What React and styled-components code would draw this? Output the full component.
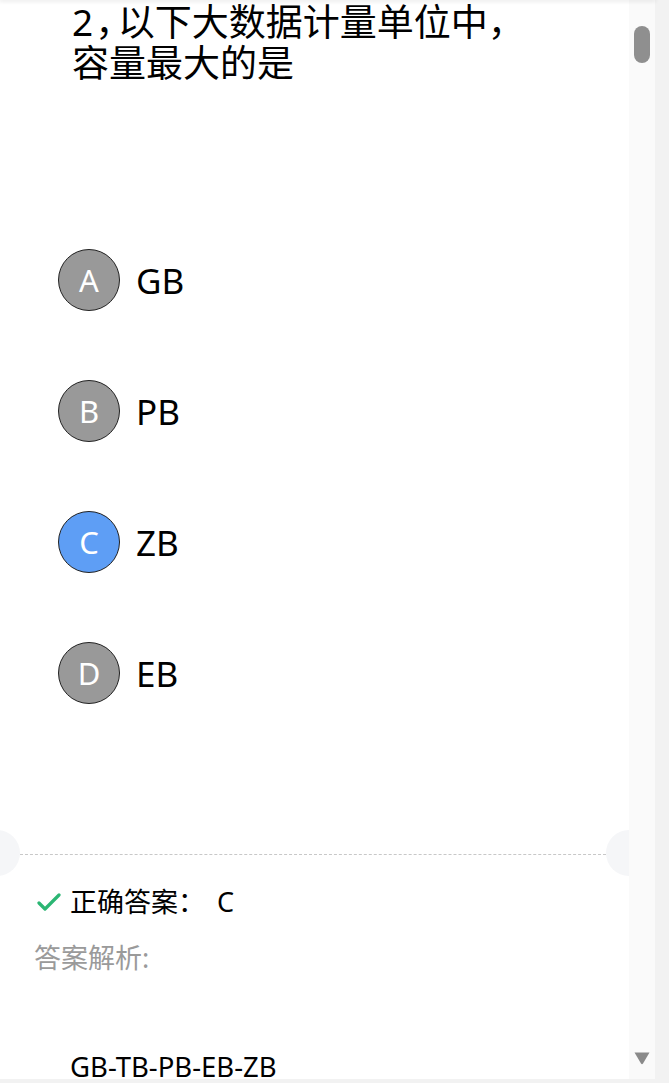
import React from "react";
import styled, { createGlobalStyle } from "styled-components";

const Global = createGlobalStyle`
  html, body { margin: 0; padding: 0; }
  body {
    background: #f2f2f2;
    font-family: "Noto Sans", "Noto Sans CJK SC", sans-serif;
    color: #000;
    overflow: hidden;
  }
`;

const Page = styled.div`
  display: flex;
  width: 669px;
  height: 1083px;
  background: #f2f2f2;
`;

const Frame = styled.div`
  display: flex;
  flex-direction: column;
  width: 655px;
  height: 1079px;
`;

const TopShadow = styled.div`
  position: relative;
  z-index: 2;
  height: 0;
  box-shadow: 0 0 4px 1px rgba(0, 0, 0, 0.14);
`;

const Body = styled.div`
  display: flex;
  flex: 1;
  min-height: 0;
`;

const Content = styled.div`
  width: 629px;
  background: #fff;
  overflow: hidden;
  display: flex;
  flex-direction: column;
`;

const Track = styled.div`
  width: 26px;
  background: #fafafa;
  display: flex;
  flex-direction: column;
  align-items: center;
  justify-content: space-between;
  padding: 26px 0 14px;
  box-sizing: border-box;
`;

const Thumb = styled.div`
  width: 16px;
  height: 37px;
  border-radius: 8px;
  background: #8f8f8f;
`;

const Question = styled.div`
  padding: 1px 0 0 72px;
  width: 470px;
  font-size: 37px;
  line-height: 41px;
`;

const Punct = styled.span`
  font-feature-settings: "halt";
  padding-left: 2px;
  padding-right: 4px;
`;

const OptionList = styled.div`
  display: flex;
  flex-direction: column;
  gap: 69px;
  margin-top: 166px;
  padding-left: 58px;
`;

const OptionRow = styled.div`
  display: flex;
  align-items: center;
  gap: 16px;
  height: 62px;
`;

const Badge = styled.div`
  width: 60px;
  height: 60px;
  border-radius: 50%;
  border: 1px solid #222;
  background: ${(p) => (p.$active ? "#5e9ef5" : "#999999")};
  color: #fff;
  display: flex;
  align-items: center;
  justify-content: center;
  font-size: 31px;
  line-height: 1;
`;

const OptionLabel = styled.span`
  font-size: 35px;
  line-height: 1;
`;

const Divider = styled.div`
  display: flex;
  align-items: center;
  margin-top: 126px;
  height: 46px;
`;

const Notch = styled.div`
  flex: none;
  width: 46px;
  height: 46px;
  border-radius: 50%;
  background: #f5f6f8;
  margin-left: ${(p) => (p.$side === "left" ? "-26px" : "0")};
  margin-right: ${(p) => (p.$side === "right" ? "-23px" : "0")};
`;

const Dashes = styled.div`
  flex: 1;
  border-top: 1px dashed #c8c8c8;
  margin-top: 3px;
`;

const AnswerRow = styled.div`
  display: flex;
  align-items: center;
  gap: 9px;
  margin-top: 8px;
  padding-left: 37px;
  height: 36px;
  font-size: 27px;
  line-height: 36px;
`;

const AnswerValue = styled.span`
  margin-left: 12px;
`;

const AnalysisLabel = styled.div`
  margin-top: 20px;
  padding-left: 34px;
  font-size: 27px;
  line-height: 36px;
  color: #9a9a9a;
`;

const Explanation = styled.div`
  margin-top: 73px;
  padding-left: 70px;
  font-size: 27.5px;
  line-height: 36px;
`;

const options = [
  { key: "A", label: "GB" },
  { key: "B", label: "PB" },
  { key: "C", label: "ZB", active: true },
  { key: "D", label: "EB" },
];

export default function App() {
  return (
    <>
      <Global />
      <Page>
        <Frame>
          <TopShadow />
          <Body>
            <Content>
              <Question>
                2<Punct>，</Punct>以下大数据计量单位中，容量最大的是
              </Question>
              <OptionList>
                {options.map((o) => (
                  <OptionRow key={o.key}>
                    <Badge $active={o.active}>{o.key}</Badge>
                    <OptionLabel>{o.label}</OptionLabel>
                  </OptionRow>
                ))}
              </OptionList>
              <Divider>
                <Notch $side="left" />
                <Dashes />
                <Notch $side="right" />
              </Divider>
              <AnswerRow>
                <svg width="24" height="18" viewBox="0 0 24 18" fill="none">
                  <polyline
                    points="2,10 8,16 22,2"
                    stroke="#2bb673"
                    strokeWidth="3.2"
                    strokeLinecap="round"
                    strokeLinejoin="round"
                  />
                </svg>
                <span>
                  正确答案：<AnswerValue>C</AnswerValue>
                </span>
              </AnswerRow>
              <AnalysisLabel>答案解析:</AnalysisLabel>
              <Explanation>GB-TB-PB-EB-ZB</Explanation>
            </Content>
            <Track>
              <Thumb />
              <svg width="16" height="13" viewBox="0 0 16 13">
                <path d="M0.5 0.5 H15.5 L9 11.5 Q8 13 7 11.5 Z" fill="#8a8a8a" />
              </svg>
            </Track>
          </Body>
        </Frame>
      </Page>
    </>
  );
}
